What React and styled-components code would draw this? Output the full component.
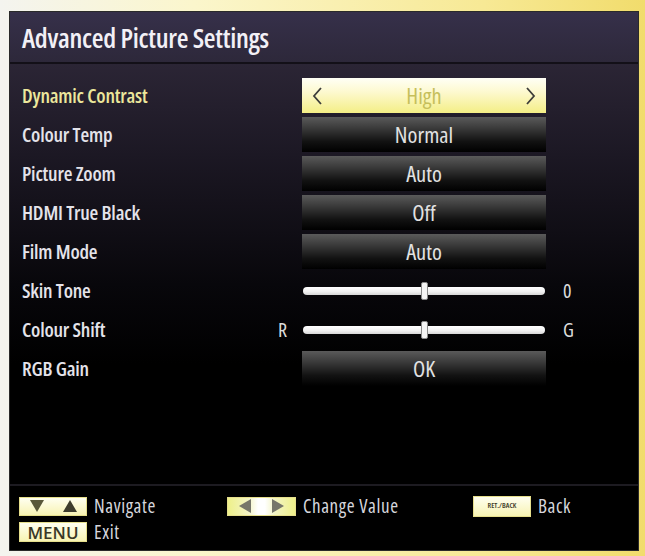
import styled, { createGlobalStyle } from "styled-components";

const GlobalStyle = createGlobalStyle`
    html, body {
        margin: 0;
        padding: 0;
    }
    body {
        background: linear-gradient(90deg, #f4f4ef 0%, #fbf6cc 30%, #f7e995 75%, #f1dc6c 100%);
        font-family: "Open Sans", "DejaVu Sans", sans-serif;
        font-stretch: 75%;
    }
`

const rows = [
    { label: "Dynamic Contrast", kind: "select", value: "High", active: true },
    { label: "Colour Temp", kind: "button", value: "Normal" },
    { label: "Picture Zoom", kind: "button", value: "Auto" },
    { label: "HDMI True Black", kind: "button", value: "Off" },
    { label: "Film Mode", kind: "button", value: "Auto" },
    { label: "Skin Tone", kind: "slider", value: 50, after: "0" },
    { label: "Colour Shift", kind: "slider", value: 50, before: "R", after: "G" },
    { label: "RGB Gain", kind: "button", value: "OK" },
]

function Chevron({ dir }) {
    const points = dir === "left" ? "9,2 2,10 9,18" : "2,2 9,10 2,18";
    return (
        <svg width="11" height="20" viewBox="0 0 11 20">
            <polyline points={points} fill="none" stroke="#3d3d3a" strokeWidth="1.8" strokeLinejoin="miter" />
        </svg>
    )
}

function Tri({ dir, color }) {
    const shapes = {
        down: "0,0 14,0 7,12",
        up: "7,0 14,12 0,12",
        left: "12,0 12,14 0,7",
        right: "0,0 12,7 0,14",
    }
    const vertical = dir === "down" || dir === "up";
    return (
        <svg width={vertical ? 14 : 12} height={vertical ? 12 : 14} viewBox={vertical ? "0 0 14 12" : "0 0 12 14"}>
            <polygon points={shapes[dir]} fill={color} />
        </svg>
    )
}

function SettingRow({ row }) {
    return (
        <Row>
            <Label active={row.active}>{row.label}</Label>
            <Side>{row.before}</Side>
            {row.kind === "select" &&
                <ValueBox active>
                    <Chevron dir="left" />
                    <ValueText active>{row.value}</ValueText>
                    <Chevron dir="right" />
                </ValueBox>
            }
            {row.kind === "button" &&
                <ValueBox>
                    <ValueText>{row.value}</ValueText>
                </ValueBox>
            }
            {row.kind === "slider" &&
                <Track>
                    <Thumb style={{ left: `${row.value}%` }} />
                </Track>
            }
            <After>{row.after}</After>
        </Row>
    )
}

export default function App() {
    return (
        <>
            <GlobalStyle />
            <Frame>
                <Panel>
                    <Head>
                        <Title>Advanced Picture Settings</Title>
                    </Head>
                    <Content>
                        {rows.map((row) => <SettingRow key={row.label} row={row} />)}
                    </Content>
                    <Footer>
                        <Hint>
                            <Key width={68}>
                                <Tri dir="down" color="#59583a" />
                                <Tri dir="up" color="#3e3d2c" />
                            </Key>
                            Navigate
                        </Hint>
                        <Hint>
                            <Key width={69} split>
                                <Tri dir="left" color="#76766a" />
                                <Tri dir="right" color="#76766a" />
                            </Key>
                            Change Value
                        </Hint>
                        <Hint>
                            <Key width={58} height={21} small>RET./BACK</Key>
                            Back
                        </Hint>
                        <Hint>
                            <Key width={68} height={20} text>MENU</Key>
                            Exit
                        </Hint>
                    </Footer>
                </Panel>
            </Frame>
        </>
    )
}

const Frame = styled.div`
    width: 645px;
    height: 556px;
    box-sizing: border-box;
    padding: 11px 6px 5px 9px;
`

const Panel = styled.div`
    height: 100%;
    display: flex;
    flex-direction: column;
    background-color: #000;
    border: 1px solid #2a2a2a;
    box-sizing: border-box;
`

const Head = styled.div`
    height: 50px;
    display: flex;
    align-items: center;
    padding-left: 12px;
    background: linear-gradient(180deg, #36304a 0%, #2d283a 100%);
    border-bottom: 2px solid #131018;
`

const Title = styled.h1`
    margin: 0;
    font-size: 27px;
    font-weight: 600;
    letter-spacing: -0.3px;
    color: #f2f0f6;
`

const Content = styled.div`
    flex: 1;
    padding-top: 12px;
    background: linear-gradient(180deg, #2b2535 0%, #1c1824 90px, #08070b 220px, #000 300px);
`

const Row = styled.div`
    height: 39px;
    display: grid;
    grid-template-columns: 246px 34px 244px 1fr;
    align-items: center;
    padding-left: 12px;
`

const Label = styled.span`
    font-size: 20px;
    font-weight: 600;
    letter-spacing: -0.2px;
    color: ${(p) => (p.active ? "#ece79c" : "#e4e3ea")};
`

const Side = styled.span`
    padding-left: 10px;
    font-size: 20px;
    font-weight: 500;
    color: #dcdcdc;
`

const After = styled(Side)`
    padding-left: 17px;
`

const ValueBox = styled.div`
    height: 35px;
    display: flex;
    align-items: center;
    justify-content: ${(p) => (p.active ? "space-between" : "center")};
    padding: 0 10px;
    box-sizing: border-box;
    background: ${(p) => p.active
        ? "linear-gradient(180deg, #fffff6 0%, #fdf9cf 40%, #f4ee86 100%)"
        : "linear-gradient(180deg, #5a5a5a 0%, #3c3c3c 30%, #121212 70%, #000 100%)"};
`

const ValueText = styled.span`
    font-size: 22.5px;
    font-weight: 500;
    color: ${(p) => (p.active ? "#c6bf5c" : "#e2e2e2")};
`

const Track = styled.div`
    position: relative;
    height: 8px;
    margin-left: 1px;
    margin-right: 1px;
    border-radius: 4px;
    background: linear-gradient(180deg, #ffffff 0%, #f0f0f0 60%, #d6d6d6 100%);
`

const Thumb = styled.div`
    position: absolute;
    top: -5px;
    width: 5px;
    height: 16px;
    margin-left: -3px;
    border: 1px solid #8a8a8a;
    border-radius: 2px;
    background: #f4f4f4;
`

const Footer = styled.div`
    height: 66px;
    box-sizing: border-box;
    display: grid;
    grid-template-columns: 208px 246px 1fr;
    grid-template-rows: 20px 20px;
    row-gap: 6px;
    align-content: start;
    padding: 10px 0 0 9px;
    border-top: 2px solid #1d1b21;
`

const Hint = styled.div`
    height: 20px;
    display: flex;
    align-items: center;
    gap: 7px;
    font-size: 19px;
    letter-spacing: 0.6px;
    line-height: 20px;
    font-weight: 500;
    color: #d6d6dc;
`

const Key = styled.span`
    width: ${(p) => p.width}px;
    height: ${(p) => p.height || 19}px;
    box-sizing: border-box;
    display: flex;
    align-items: center;
    justify-content: ${(p) => (p.text || p.small ? "center" : "space-around")};
    border: 1px solid #e6df8c;
    background: ${(p) => p.split
        ? "linear-gradient(90deg, #eef08a 0%, #f3f4c4 30%, #ffffff 45%, #ffffff 55%, #f3f4c4 70%, #eef08a 100%)"
        : "linear-gradient(180deg, #fffff0 0%, #f7f3b4 100%)"};
    font-size: ${(p) => (p.small ? "7.5px" : "17px")};
    letter-spacing: 0;
    line-height: 1;
    font-weight: 600;
    font-stretch: ${(p) => (p.small ? "75%" : "100%")};
    color: #3a3826;
`
